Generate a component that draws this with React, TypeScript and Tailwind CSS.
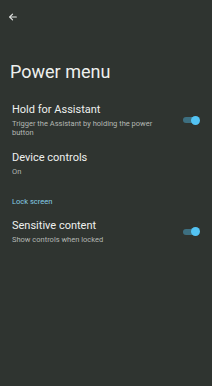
export default function App() {
  const font = { fontFamily: 'Roboto, "Noto Sans", sans-serif' };

  return (
    <div className="w-[212px] h-[386px] bg-[#2f3430] text-[#eef0ee] overflow-hidden" style={font}>
      <div className="h-[34px] flex items-center pl-[8px]">
        <svg width="10" height="10" viewBox="0 0 24 24" fill="none" stroke="#e6e8e6" strokeWidth="2.6" strokeLinecap="round" strokeLinejoin="round">
          <path d="M20 12H5" />
          <path d="M11 5l-7 7 7 7" />
        </svg>
      </div>

      <h1 className="mt-[27px] pl-[10px] text-[18px] leading-[22px] font-normal">Power menu</h1>

      <div className="mt-[13px] flex flex-col">
        <SettingRow
          title="Hold for Assistant"
          summary="Trigger the Assistant by holding the power button"
          toggle
        />
        <SettingRow title="Device controls" summary="On" />

        <div className="px-[12px] pt-[14px] pb-[6px] text-[7.5px] leading-[9px] text-[#86cde3]">Lock screen</div>

        <SettingRow
          title="Sensitive content"
          summary="Show controls when locked"
          toggle
        />
      </div>
    </div>
  );
}

function SettingRow({ title, summary, toggle }: { title: string; summary: string; toggle?: boolean }) {
  return (
    <div className="flex items-center px-[12px] py-[7px]">
      <div className="flex-1 pr-[30px]">
        <div className="text-[11px] leading-[14px] text-[#eef0ee]">{title}</div>
        <div className="mt-[2px] text-[7.5px] leading-[9px] text-[#b3b7b3]">{summary}</div>
      </div>
      {toggle && (
        <div className="relative w-[17px] h-[9px] flex items-center shrink-0">
          <div className="w-[14px] h-[6px] rounded-full bg-[#3d6f80]" />
          <div className="absolute right-0 top-0 w-[9px] h-[9px] rounded-full bg-[#53c3f3]" />
        </div>
      )}
    </div>
  );
}
